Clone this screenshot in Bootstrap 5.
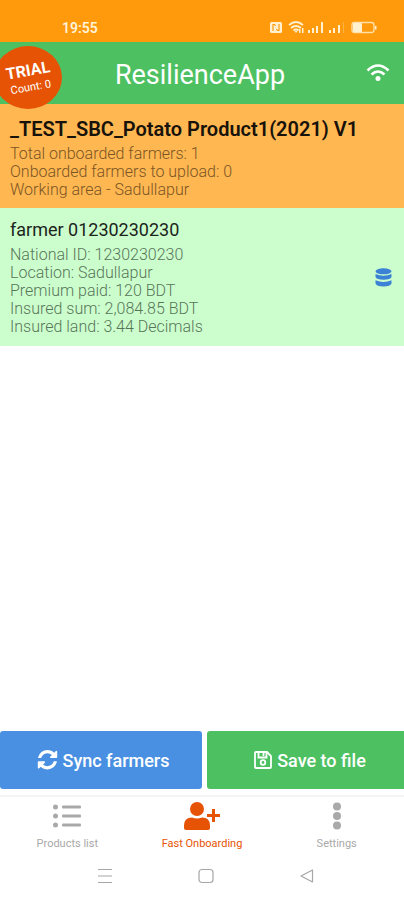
<!DOCTYPE html>
<html lang="en">
<head>
<meta charset="utf-8">
<meta name="viewport" content="width=device-width, initial-scale=1">
<title>ResilienceApp</title>
<link href="https://cdn.jsdelivr.net/npm/bootstrap@5.3.0/dist/css/bootstrap.min.css" rel="stylesheet">
<style>
  body { font-family: Roboto, "Liberation Sans", sans-serif; background: #fff; }
  svg { display: block; flex: none; }
  .status-bar { height: 42px; background: #ff9a0c; color: #fff3d8; padding: 14px 27px 0 62px; font-size: 14px; line-height: 28px; font-weight: 600; }
  .app-bar { height: 62px; background: #4dc162; color: #fff; padding-right: 12px; }
  .app-title { font-size: 27px; line-height: 32px; font-weight: 400; padding-top: 4px; }
  .trial { position: absolute; left: -6px; top: 4px; width: 68px; height: 63px; border-radius: 50%; background: #e65305; z-index: 2; }
  .trial-text { transform: rotate(-10deg); padding-left: 2px; }
  .trial-name { font-size: 16px; line-height: 19px; font-weight: 700; }
  .trial-count { font-size: 11px; line-height: 15px; }
  .wifi-slot { position: absolute; right: 14px; top: 22px; }
  .product { background: #ffb752; padding: 13px 10px 9px; }
  .product h2 { font-size: 20px; line-height: 24px; font-weight: 600; color: #17120a; margin: 0 0 4px; }
  .info { font-size: 16px; line-height: 18px; font-weight: 300; }
  .product .info { color: #7a5523; }
  .farmer { background: #ccfecd; padding: 11px 12px 10px 10px; }
  .farmer h3 { font-size: 18px; line-height: 22px; font-weight: 400; color: #1c241c; margin: 0 0 5px; }
  .farmer .info { color: #587559; }
  .actions { gap: 5px; padding-bottom: 6px; }
  .action { height: 58px; border: 0; border-radius: 3px; color: #fff; font-size: 18px; font-weight: 500; gap: 5px; }
  .action:hover { color: #fff; }
  .sync { background: #4a90e2 !important; }
  .save { background: #4dc162 !important; }
  .tabs { border-top: 2px solid #f5f5f5; height: 59px; padding-top: 4px; }
  .tab { color: #a9a9a9; font-size: 11px; line-height: 14px; gap: 6px; }
  .tab.active { color: #e65305; }
  .sys { height: 46px; padding: 0 46px 2px 54px; color: #a6a6a6; }
  .sys button { color: inherit; }
</style>
</head>
<body>
<div class="d-flex flex-column min-vh-100">
  <div class="status-bar d-flex justify-content-between align-items-start">
    <span>19:55</span>
    <span class="d-flex align-items-center pt-1" aria-hidden="true">
      <svg width="108" height="18" viewBox="0 0 108 18" fill="#fff0d0">
        <rect x="1" y="4" width="12" height="11" rx="1.500"/>
        <path d="M4 13V6.500h1.500L6.500 8M10 6v6.500H8.500L7.500 11" stroke="#ff9a0c" stroke-width="1.200" fill="none"/>
        <path d="M20 7q7-6 14 0M22 10q5-4 10 0M24.500 12.500q2.500-2 5 0" stroke="#fff0d0" stroke-width="1.800" fill="none"/>
        <path d="M25.500 13h3L27 15zM30 11h1.500v4H30zM33 10h1.500v5H33z"/>
        <path d="M39 12h2v3h-2zM43 10h2v5h-2zM47 8h2v7h-2zM52 4h2v11h-2zM60 12h2v3h-2zM64 10h2v5h-2zM69 7h2v8h-2z"/>
        <path d="M74 4h1v11h-1z" opacity=".3"/>
        <rect x="83" y="4.500" width="22" height="10" rx="2.500" fill="none" stroke="#ffe0a8" stroke-width="1.300"/>
        <rect x="84" y="5" width="9" height="9" rx="1"/><path d="M106 8h1.500v3.500H106z"/>
      </svg>
    </span>
  </div>
  <header class="app-bar position-relative d-flex align-items-center justify-content-center">
    <div class="trial d-flex align-items-center justify-content-center text-center">
      <div class="trial-text">
        <div class="trial-name">TRIAL</div>
        <div class="trial-count">Count: 0</div>
      </div>
    </div>
    <h1 class="app-title mb-0 ps-2">ResilienceApp</h1>
    <div class="wifi-slot">
      <svg width="24" height="18" viewBox="0 0 24 18" fill="none" stroke="#fff" stroke-width="2.600" role="img" aria-label="Wi-Fi"><path d="M1.500 6.500Q12-3.500 22.500 6.500M5.500 10.500q6.500-6 13 0"/><circle cx="12" cy="14.500" r="2.500" fill="#fff" stroke="none"/></svg>
    </div>
  </header>
  <main class="flex-grow-1">
    <section class="product">
      <h2>_TEST_SBC_Potato Product1(2021) V1</h2>
      <div class="info">Total onboarded farmers: 1</div>
      <div class="info">Onboarded farmers to upload: 0</div>
      <div class="info">Working area - Sadullapur</div>
    </section>
    <section class="farmer d-flex align-items-center justify-content-between">
      <div>
        <h3>farmer 01230230230</h3>
        <div class="info">National ID: 1230230230</div>
        <div class="info">Location: Sadullapur</div>
        <div class="info">Premium paid: 120 BDT</div>
        <div class="info">Insured sum: 2,084.85 BDT</div>
        <div class="info">Insured land: 3.44 Decimals</div>
      </div>
      <svg width="17" height="19" viewBox="0 0 17 19" fill="#3b82d6" role="img" aria-label="Stored locally"><ellipse cx="8.500" cy="3.300" rx="8" ry="3"/><path d="M.5 6q8 3.500 16 0v3q-1 2.800-8 2.800T.5 9z"/><path d="M.5 12.200q8 3.500 16 0v3.300q-1 3-8 3t-8-3z"/></svg>
    </section>
  </main>
  <div class="actions d-flex overflow-hidden">
    <button type="button" class="action sync btn d-flex flex-shrink-0 w-50 align-items-center justify-content-center ps-3">
      <svg width="21" height="21" viewBox="0 0 1536 1664" fill="#fff" aria-hidden="true"><path d="M1511 928q0 5-1 7-64 268-268 434.500t-478 166.500q-146 0-282.500-55t-243.500-157l-129 129q-19 19-45 19t-45-19-19-45v-448q0-26 19-45t45-19h448q26 0 45 19t19 45-19 45l-137 137q71 66 161 102t187 36q134 0 250-65t186-179q11-17 53-117 8-23 30-23h192q13 0 22.500 9.500t9.500 22.500zm25-800v448q0 26-19 45t-45 19h-448q-26 0-45-19t-19-45 19-45l138-138q-148-137-349-137-134 0-250 65t-186 179q-11 17-53 117-8 23-30 23h-199q-13 0-22.500-9.500t-9.500-22.500v-7q65-268 270-434.500t480-166.500q146 0 284 55.500t245 156.500l130-129q19-19 45-19t45 19 19 45z"/></svg>
      <span>Sync farmers</span>
    </button>
    <button type="button" class="action save btn d-flex flex-shrink-0 w-50 align-items-center justify-content-center ps-3">
      <svg width="18" height="18" viewBox="0 0 18 18" fill="none" stroke="#fff" stroke-width="1.800" aria-hidden="true"><path d="M2 1h11l4 4v11a1 1 0 0 1-1 1H2a1 1 0 0 1-1-1V2a1 1 0 0 1 1-1z"/><path d="M4.500 1v5.500h8V1M9.500 2v3"/><circle cx="9" cy="11.500" r="2.300"/></svg>
      <span>Save to file</span>
    </button>
  </div>
  <nav class="tabs d-flex" aria-label="Main">
    <a href="#products" class="tab col d-flex flex-column align-items-center text-decoration-none">
      <svg width="28" height="30" viewBox="0 0 28 30" fill="currentColor" aria-hidden="true"><circle cx="2.500" cy="6" r="2.500"/><circle cx="2.500" cy="15" r="2.500"/><circle cx="2.500" cy="24" r="2.500"/><rect x="9" y="4.500" width="19" height="3" rx="1"/><rect x="9" y="13.500" width="19" height="3" rx="1"/><rect x="9" y="22.500" width="19" height="3" rx="1"/></svg>
      <span>Products list</span>
    </a>
    <a href="#onboarding" class="tab active col d-flex flex-column align-items-center text-decoration-none" aria-current="page">
      <svg width="36" height="30" viewBox="0 0 36 30" fill="currentColor" aria-hidden="true"><circle cx="13" cy="8" r="7"/><path d="M8 16.500q5 2 10 0 8 0 8 8V27q0 2-2 2H2q-2 0-2-2v-2.500q0-8 8-8z"/><path d="M28 8h3v5h5v3h-5v5h-3v-5h-5v-3h5z"/></svg>
      <span>Fast Onboarding</span>
    </a>
    <a href="#settings" class="tab col d-flex flex-column align-items-center text-decoration-none">
      <svg width="10" height="30" viewBox="0 0 10 30" fill="currentColor" aria-hidden="true"><circle cx="5" cy="5.500" r="4"/><circle cx="5" cy="15" r="4"/><circle cx="5" cy="24.500" r="4"/></svg>
      <span>Settings</span>
    </a>
  </nav>
  <div class="sys d-flex align-items-center">
    <button type="button" class="btn p-0 border-0 col d-flex justify-content-center" aria-label="Recent apps"><svg width="16" height="16" viewBox="0 0 16 16" stroke="currentColor" stroke-width="1.200"><path d="M1 1.500h14M1 8h14M1 14.500h14"/></svg></button>
    <button type="button" class="btn p-0 border-0 col d-flex justify-content-center" aria-label="Home"><svg width="16" height="16" viewBox="0 0 16 16" fill="none" stroke="currentColor" stroke-width="1.200"><rect x="1" y="1.500" width="14" height="13" rx="3"/></svg></button>
    <button type="button" class="btn p-0 border-0 col d-flex justify-content-center" aria-label="Back"><svg width="16" height="16" viewBox="0 0 16 16" fill="none" stroke="currentColor" stroke-width="1.200" stroke-linejoin="round"><path d="M13.500 2v12L2 8z"/></svg></button>
  </div>
</div>
<script src="https://cdn.jsdelivr.net/npm/bootstrap@5.3.0/dist/js/bootstrap.bundle.min.js"></script>
</body>
</html>
